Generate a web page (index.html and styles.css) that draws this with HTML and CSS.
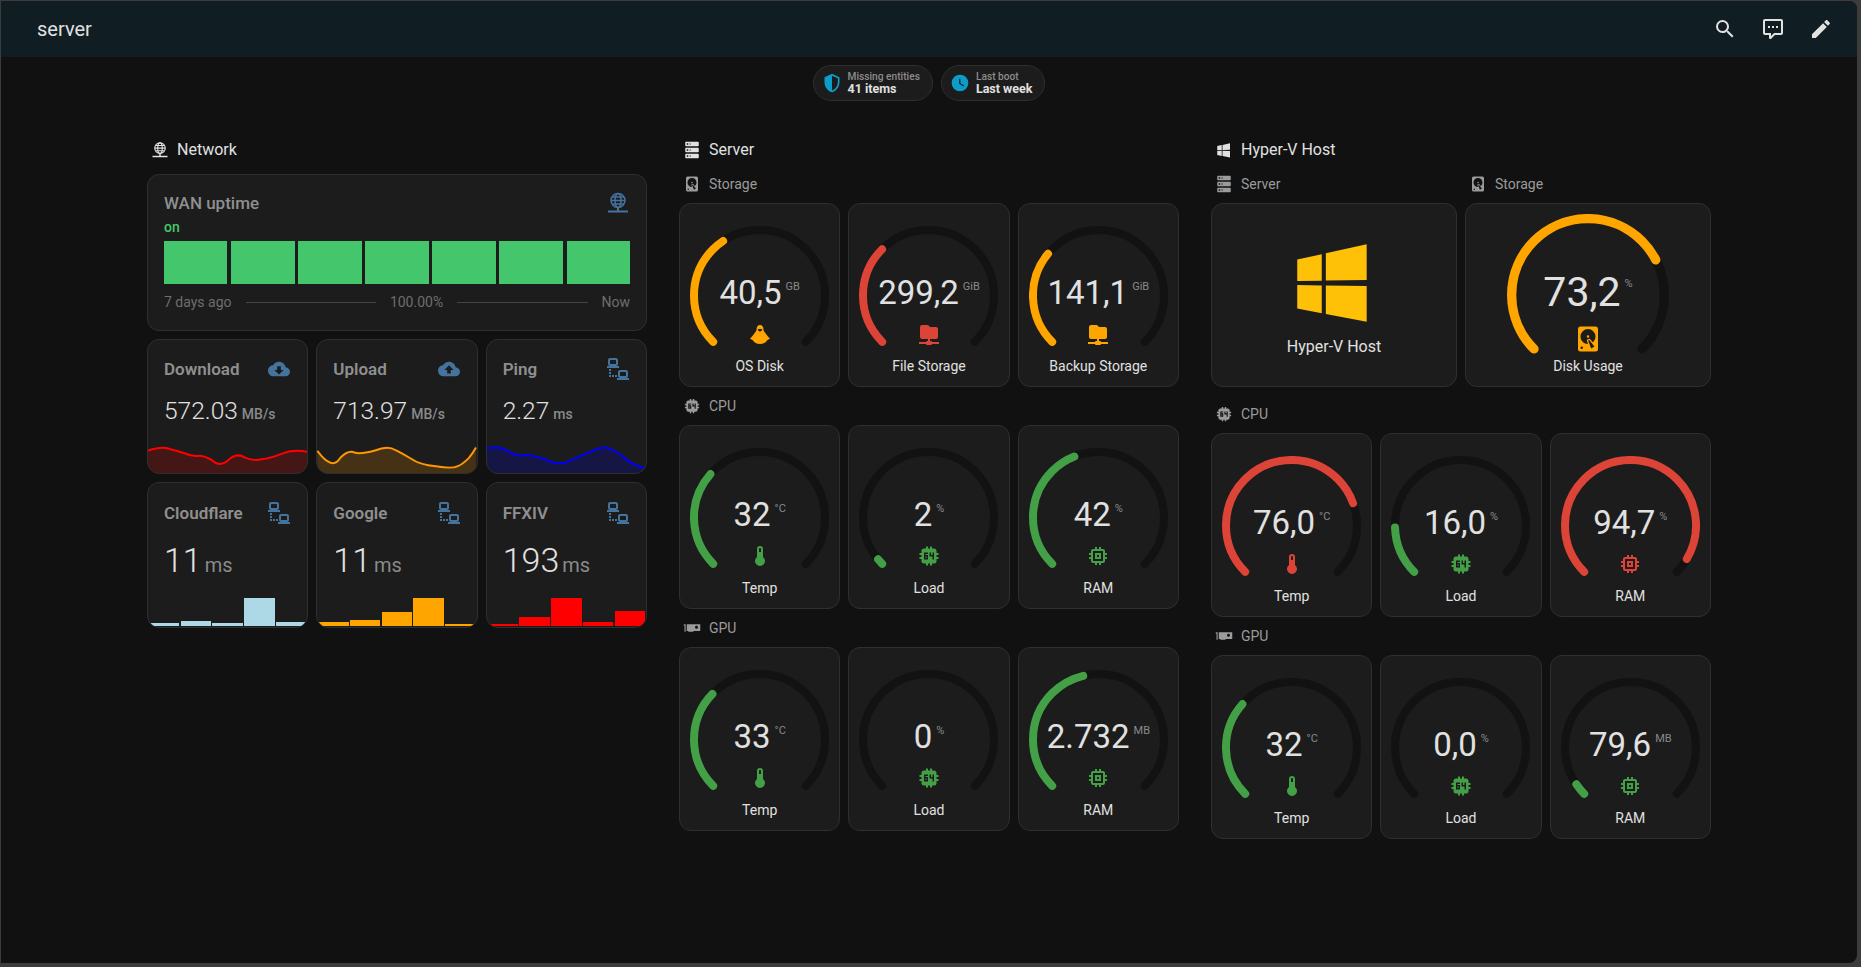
FILE: index.html
```html
<!DOCTYPE html>
<html lang="en">
<head>
    <meta charset="UTF-8">
    <meta name="viewport" content="width=device-width, initial-scale=1.0">
    <title>server</title>
    <link rel="stylesheet" href="styles.css">
</head>
<body>
    <!-- icon set -->
    <svg class="icon-set" aria-hidden="true">
        <symbol id="i-search" viewBox="0 0 24 24"><path d="M9.5,3A6.5,6.5 0 0,1 16,9.5C16,11.11 15.41,12.59 14.44,13.73L14.71,14H15.5L20.5,19L19,20.5L14,15.5V14.71L13.73,14.44C12.59,15.41 11.11,16 9.5,16A6.5,6.5 0 0,1 3,9.5A6.5,6.5 0 0,1 9.5,3M9.5,5C7,5 5,7 5,9.5C5,12 7,14 9.5,14C12,14 14,12 14,9.5C14,7 12,5 9.5,5Z"/></symbol>
        <symbol id="i-comment" viewBox="0 0 24 24"><path d="M9,22A1,1 0 0,1 8,21V18H4A2,2 0 0,1 2,16V4C2,2.89 2.9,2 4,2H20A2,2 0 0,1 22,4V16A2,2 0 0,1 20,18H13.9L10.2,21.71C10,21.9 9.75,22 9.5,22V22H9M10,16V19.08L13.08,16H20V4H4V16H10M17,11H15V9H17V11M13,11H11V9H13V11M9,11H7V9H9V11Z"/></symbol>
        <symbol id="i-pencil" viewBox="0 0 24 24"><path d="M20.71,7.04C21.1,6.65 21.1,6 20.71,5.63L18.37,3.29C18,2.9 17.35,2.9 16.96,3.29L15.12,5.12L18.87,8.87M3,17.25V21H6.75L17.81,9.93L14.06,6.18L3,17.25Z"/></symbol>
        <symbol id="i-shield" viewBox="0 0 24 24"><path d="M21,11C21,16.55 17.16,21.74 12,23C6.84,21.74 3,16.55 3,11V5L12,1L21,5V11M12,21C15.75,20 19,15.54 19,11.22V6.3L12,3.18V21Z"/></symbol>
        <symbol id="i-clock" viewBox="0 0 24 24"><path d="M12,2A10,10 0 0,0 2,12A10,10 0 0,0 12,22A10,10 0 0,0 22,12A10,10 0 0,0 12,2M16.2,16.2L11,13V7H12.5V12.2L17,14.9L16.2,16.2Z"/></symbol>
        <symbol id="i-wan" viewBox="0 0 24 24">
            <g fill="none" stroke="currentColor" stroke-width="1.5">
                <circle cx="12" cy="9.5" r="7"/>
                <ellipse cx="12" cy="9.5" rx="3" ry="7"/>
                <path d="M5 9.5H19M6 6H18M6 13H18"/>
            </g>
            <path d="M11 16H13V19.5H22V21.5H2V19.5H11Z"/>
        </symbol>
        <symbol id="i-server" viewBox="0 0 24 24"><path d="M4,1H20A1,1 0 0,1 21,2V6A1,1 0 0,1 20,7H4A1,1 0 0,1 3,6V2A1,1 0 0,1 4,1M4,9H20A1,1 0 0,1 21,10V14A1,1 0 0,1 20,15H4A1,1 0 0,1 3,14V10A1,1 0 0,1 4,9M4,17H20A1,1 0 0,1 21,18V22A1,1 0 0,1 20,23H4A1,1 0 0,1 3,22V18A1,1 0 0,1 4,17M9,5H10V3H9V5M9,13H10V11H9V13M9,21H10V19H9V21M5,3V5H7V3H5M5,11V13H7V11H5M5,19V21H7V19H5Z"/></symbol>
        <symbol id="i-windows" viewBox="0 0 24 24"><path d="M3,12V6.75L9,5.43V11.91L3,12M20,3V11.75L10,11.9V5.21L20,3M3,13L9,13.09V19.9L3,18.75V13M20,13.25V22L10,20.09V13.1L20,13.25Z"/></symbol>
        <symbol id="i-disk" viewBox="0 0 24 24"><path d="M6,2H18A2,2 0 0,1 20,4V20A2,2 0 0,1 18,22H6A2,2 0 0,1 4,20V4A2,2 0 0,1 6,2M12,4A6,6 0 0,0 6,10C6,13.31 8.69,16 12.1,16L11.22,13.77C10.95,13.29 11.11,12.68 11.59,12.4L12.45,11.9C12.93,11.63 13.54,11.79 13.82,12.27L15.74,14.69C17.12,13.59 18,11.9 18,10A6,6 0 0,0 12,4M12,9A1,1 0 0,1 13,10A1,1 0 0,1 12,11A1,1 0 0,1 11,10A1,1 0 0,1 12,9M7,18A1,1 0 0,0 6,19A1,1 0 0,0 7,20A1,1 0 0,0 8,19A1,1 0 0,0 7,18M12.09,13.27L14.58,19.58L17.17,18.08L12.95,12.77L12.09,13.27Z"/></symbol>
        <symbol id="i-cpu" viewBox="0 0 24 24"><path fill-rule="evenodd" d="M9 2.5V4.5H7A2.5 2.5 0 0 0 4.5 7V9H2.5V11H4.5V13H2.5V15H4.5V17A2.5 2.5 0 0 0 7 19.5H9V21.5H11V19.5H13V21.5H15V19.5H17A2.5 2.5 0 0 0 19.5 17V15H21.5V13H19.5V11H21.5V9H19.5V7A2.5 2.5 0 0 0 17 4.5H15V2.5H13V4.5H11V2.5ZM7 8.5H11V10H8.5V11H11V15.5H7ZM8.5 12.5V14H9.5V12.5ZM12.5 8.5H14V11H15.5V8.5H17V15.5H15.5V12.5H12.5Z"/></symbol>
        <symbol id="i-memory" viewBox="0 0 24 24"><path d="M17,17H7V7H17M21,11V9H19V7C19,5.89 18.1,5 17,5H15V3H13V5H11V3H9V5H7C5.89,5 5,5.89 5,7V9H3V11H5V13H3V15H5V17A2,2 0 0,0 7,19H9V21H11V19H13V21H15V19H17A2,2 0 0,0 19,17V15H21V13H19V11M13,13H11V11H13M15,9H9V15H15V9Z"/></symbol>
        <symbol id="i-gpu" viewBox="0 0 24 24"><path d="M1 7H3.5V17H2V8.5H1M23 7V16H14V17H7V16H5V7ZM18 9C16.9 9 16 9.9 16 11C16 12.1 16.9 13 18 13C19.1 13 20 12.1 20 11C20 9.9 19.1 9 18 9Z"/></symbol>
        <symbol id="i-thermo" viewBox="0 0 24 24"><path d="M15 13V5A3 3 0 0 0 9 5V13A5 5 0 1 0 15 13M12 4A1 1 0 0 1 13 5V8H11V5A1 1 0 0 1 12 4Z"/></symbol>
        <symbol id="i-linux" viewBox="0 0 24 24"><path fill-rule="evenodd" d="M12 3C9.7 3 8.6 4.8 8.6 7C8.6 8.6 7.6 9.9 6.5 11.3C5.3 12.8 3.8 15 2 16.8C3.2 17.2 4.2 17.6 4.9 18.2C5.8 20.6 8.8 22 12 22C15.2 22 18.2 20.6 19.1 18.2C19.8 17.6 20.8 17.2 22 16.8C20.2 15 18.7 12.8 17.5 11.3C16.4 9.9 15.4 8.6 15.4 7C15.4 4.8 14.3 3 12 3ZM9.9 7.4C11.2 6.9 12.8 6.9 14.1 7.4C14.4 7.6 14.4 8 14.1 8.2L12.7 9.2C12.3 9.5 11.7 9.5 11.3 9.2L9.9 8.2C9.6 8 9.6 7.6 9.9 7.4Z"/></symbol>
        <symbol id="i-folder" viewBox="0 0 24 24"><path d="M3,15V5A2,2 0 0,1 5,3H11L13,5H19A2,2 0 0,1 21,7V15A2,2 0 0,1 19,17H13V19H14A1,1 0 0,1 15,20H22V22H15A1,1 0 0,1 14,23H10A1,1 0 0,1 9,22H2V20H9A1,1 0 0,1 10,19H11V17H5A2,2 0 0,1 3,15Z"/></symbol>
        <symbol id="i-down" viewBox="0 0 24 24"><path d="M17,13L12,18L7,13H10V9H14V13M19.35,10.03C18.67,6.59 15.64,4 12,4C9.11,4 6.6,5.64 5.35,8.03C2.34,8.36 0,10.9 0,14A6,6 0 0,0 6,20H19A5,5 0 0,0 24,15C24,12.36 21.95,10.22 19.35,10.03Z"/></symbol>
        <symbol id="i-up" viewBox="0 0 24 24"><path d="M14,13V17H10V13H7L12,8L17,13M19.35,10.03C18.67,6.59 15.64,4 12,4C9.11,4 6.6,5.64 5.35,8.03C2.34,8.36 0,10.9 0,14A6,6 0 0,0 6,20H19A5,5 0 0,0 24,15C24,12.36 21.95,10.22 19.35,10.03Z"/></symbol>
        <symbol id="i-lan" viewBox="0 0 24 24"><path d="M4,1C2.89,1 2,1.89 2,3V7C2,8.11 2.89,9 4,9H1V11H13V9H10C11.11,9 12,8.11 12,7V3C12,1.89 11.11,1 10,1H4M4,3H10V7H4V3M3,12V14H5V12H3M14,13C12.89,13 12,13.89 12,15V19C12,20.11 12.89,21 14,21H11V23H23V21H20C21.11,21 22,20.11 22,19V15C22,13.89 21.11,13 20,13H14M3,15V17H5V15H3M14,15H20V19H14V15M3,18V20H5V18H3M6,18V20H8V18H6M9,18V20H11V18H9Z"/></symbol>
    </svg>

    <div class="app">
        <header class="topbar">
            <h1 class="topbar-title">server</h1>
            <div class="topbar-actions">
                <svg class="icon"><use href="#i-search"/></svg>
                <svg class="icon"><use href="#i-comment"/></svg>
                <svg class="icon"><use href="#i-pencil"/></svg>
            </div>
        </header>

        <div class="chips">
            <div class="chip">
                <svg class="chip-icon"><use href="#i-shield"/></svg>
                <div><div class="chip-label">Missing entities</div><div class="chip-value">41 items</div></div>
            </div>
            <div class="chip">
                <svg class="chip-icon"><use href="#i-clock"/></svg>
                <div><div class="chip-label">Last boot</div><div class="chip-value">Last week</div></div>
            </div>
        </div>

        <main class="columns">
            <!-- Network -->
            <section>
                <h2 class="heading heading-network"><svg class="head-icon"><use href="#i-wan"/></svg>Network</h2>
                <div class="card wan">
                    <div class="card-head">
                        <span class="card-title">WAN uptime</span>
                        <svg class="state-icon"><use href="#i-wan"/></svg>
                    </div>
                    <div class="wan-state">on</div>
                    <div class="wan-bars">
                        <span></span><span></span><span></span><span></span><span></span><span></span><span></span>
                    </div>
                    <div class="wan-foot">
                        <span>7 days ago</span><i></i><span>100.00%</span><i></i><span>Now</span>
                    </div>
                </div>
                <div class="sensors">
                    <div class="card sensor">
                        <div class="card-head">
                            <span class="card-title">Download</span>
                            <svg class="state-icon cloud"><use href="#i-down"/></svg>
                        </div>
                        <div class="reading"><b>572.03</b><span>MB/s</span></div>
                        <svg class="spark spark-red" viewBox="22 330 481 101">
                            <path class="area" d="M22,362Q65,348 87,357Q110,362 132,370Q155,380 172,378Q190,376 215,391Q240,414 265,390Q290,367 315,383Q340,394 365,388Q390,386 425,372Q460,356 503,366V431H22Z"/>
                            <path class="line" d="M22,362Q65,348 87,357Q110,362 132,370Q155,380 172,378Q190,376 215,391Q240,414 265,390Q290,367 315,383Q340,394 365,388Q390,386 425,372Q460,356 503,366"/>
                        </svg>
                    </div>
                    <div class="card sensor">
                        <div class="card-head">
                            <span class="card-title">Upload</span>
                            <svg class="state-icon cloud"><use href="#i-up"/></svg>
                        </div>
                        <div class="reading"><b>713.97</b><span>MB/s</span></div>
                        <svg class="spark spark-orange" viewBox="529 330 484 101">
                            <path class="area" d="M530,363Q575,425 600,384Q625,358 645,369Q665,373 705,362Q745,345 768,361Q790,372 815,387Q840,405 890,410Q940,418 955,410Q970,405 990,385Q1003,370 1012,353V431H530Z"/>
                            <path class="line" d="M530,363Q575,425 600,384Q625,358 645,369Q665,373 705,362Q745,345 768,361Q790,372 815,387Q840,405 890,410Q940,418 955,410Q970,405 990,385Q1003,370 1012,353"/>
                        </svg>
                    </div>
                    <div class="card sensor">
                        <div class="card-head">
                            <span class="card-title">Ping</span>
                            <svg class="state-icon"><use href="#i-lan"/></svg>
                        </div>
                        <div class="reading"><b>2.27</b><span>ms</span></div>
                        <svg class="spark spark-blue" viewBox="1039 330 481 101">
                            <path class="area" d="M1040,355Q1080,347 1105,365Q1130,381 1150,376Q1170,373 1216,389Q1262,409 1286,394Q1310,383 1350,366Q1390,346 1408,356Q1425,360 1452,382Q1480,408 1520,415V431H1040Z"/>
                            <path class="line" d="M1040,355Q1080,347 1105,365Q1130,381 1150,376Q1170,373 1216,389Q1262,409 1286,394Q1310,383 1350,366Q1390,346 1408,356Q1425,360 1452,382Q1480,408 1520,415"/>
                        </svg>
                    </div>
                    <div class="card sensor sensor-tall">
                        <div class="card-head">
                            <span class="card-title">Cloudflare</span>
                            <svg class="state-icon"><use href="#i-lan"/></svg>
                        </div>
                        <div class="reading"><b>11</b><span>ms</span></div>
                        <div class="hist hist-blue">
                            <span style="height:3.7px"></span><span style="height:5.3px"></span><span style="height:3px"></span><span style="height:28.3px"></span><span style="height:4.3px"></span>
                        </div>
                    </div>
                    <div class="card sensor sensor-tall">
                        <div class="card-head">
                            <span class="card-title">Google</span>
                            <svg class="state-icon"><use href="#i-lan"/></svg>
                        </div>
                        <div class="reading"><b>11</b><span>ms</span></div>
                        <div class="hist hist-orange">
                            <span style="height:4.3px"></span><span style="height:6px"></span><span style="height:14px"></span><span style="height:28.3px"></span><span style="height:2.7px"></span>
                        </div>
                    </div>
                    <div class="card sensor sensor-tall">
                        <div class="card-head">
                            <span class="card-title">FFXIV</span>
                            <svg class="state-icon"><use href="#i-lan"/></svg>
                        </div>
                        <div class="reading"><b>193</b><span>ms</span></div>
                        <div class="hist hist-red">
                            <span style="height:2.7px"></span><span style="height:9.3px"></span><span style="height:28.3px"></span><span style="height:4.3px"></span><span style="height:15.7px"></span>
                        </div>
                    </div>
                </div>
            </section>

            <!-- Server -->
            <section>
                <h2 class="heading"><svg class="head-icon"><use href="#i-server"/></svg>Server</h2>

                <h3 class="subheading"><svg class="head-icon"><use href="#i-disk"/></svg>Storage</h3>
                <div class="gauges">
                    <div class="card gauge warn">
                        <svg class="dial" viewBox="0 0 139 139"><path class="track" d="M23.2,115.8A65.5,65.5 0 1 1 115.8,115.8"/><path class="fill" d="M23.2,115.8A65.5,65.5 0 1 1 115.8,115.8" pathLength="100" stroke-dasharray="37.5 200"/></svg>
                        <div class="value">40,5<span class="unit">GB</span></div>
                        <svg class="gauge-icon"><use href="#i-linux"/></svg>
                        <div class="gauge-name">OS Disk</div>
                    </div>
                    <div class="card gauge crit">
                        <svg class="dial" viewBox="0 0 139 139"><path class="track" d="M23.2,115.8A65.5,65.5 0 1 1 115.8,115.8"/><path class="fill" d="M23.2,115.8A65.5,65.5 0 1 1 115.8,115.8" pathLength="100" stroke-dasharray="33.3 200"/></svg>
                        <div class="value">299,2<span class="unit">GiB</span></div>
                        <svg class="gauge-icon"><use href="#i-folder"/></svg>
                        <div class="gauge-name">File Storage</div>
                    </div>
                    <div class="card gauge warn">
                        <svg class="dial" viewBox="0 0 139 139"><path class="track" d="M23.2,115.8A65.5,65.5 0 1 1 115.8,115.8"/><path class="fill" d="M23.2,115.8A65.5,65.5 0 1 1 115.8,115.8" pathLength="100" stroke-dasharray="31.3 200"/></svg>
                        <div class="value">141,1<span class="unit">GiB</span></div>
                        <svg class="gauge-icon"><use href="#i-folder"/></svg>
                        <div class="gauge-name">Backup Storage</div>
                    </div>
                </div>

                <h3 class="subheading"><svg class="head-icon"><use href="#i-cpu"/></svg>CPU</h3>
                <div class="gauges">
                    <div class="card gauge ok">
                        <svg class="dial" viewBox="0 0 139 139"><path class="track" d="M23.2,115.8A65.5,65.5 0 1 1 115.8,115.8"/><path class="fill" d="M23.2,115.8A65.5,65.5 0 1 1 115.8,115.8" pathLength="100" stroke-dasharray="32 200"/></svg>
                        <div class="value">32<span class="unit">°C</span></div>
                        <svg class="gauge-icon"><use href="#i-thermo"/></svg>
                        <div class="gauge-name">Temp</div>
                    </div>
                    <div class="card gauge ok">
                        <svg class="dial" viewBox="0 0 139 139"><path class="track" d="M23.2,115.8A65.5,65.5 0 1 1 115.8,115.8"/><path class="fill" d="M23.2,115.8A65.5,65.5 0 1 1 115.8,115.8" pathLength="100" stroke-dasharray="2 200"/></svg>
                        <div class="value">2<span class="unit">%</span></div>
                        <svg class="gauge-icon"><use href="#i-cpu"/></svg>
                        <div class="gauge-name">Load</div>
                    </div>
                    <div class="card gauge ok">
                        <svg class="dial" viewBox="0 0 139 139"><path class="track" d="M23.2,115.8A65.5,65.5 0 1 1 115.8,115.8"/><path class="fill" d="M23.2,115.8A65.5,65.5 0 1 1 115.8,115.8" pathLength="100" stroke-dasharray="42 200"/></svg>
                        <div class="value">42<span class="unit">%</span></div>
                        <svg class="gauge-icon"><use href="#i-memory"/></svg>
                        <div class="gauge-name">RAM</div>
                    </div>
                </div>

                <h3 class="subheading"><svg class="head-icon"><use href="#i-gpu"/></svg>GPU</h3>
                <div class="gauges">
                    <div class="card gauge ok">
                        <svg class="dial" viewBox="0 0 139 139"><path class="track" d="M23.2,115.8A65.5,65.5 0 1 1 115.8,115.8"/><path class="fill" d="M23.2,115.8A65.5,65.5 0 1 1 115.8,115.8" pathLength="100" stroke-dasharray="33 200"/></svg>
                        <div class="value">33<span class="unit">°C</span></div>
                        <svg class="gauge-icon"><use href="#i-thermo"/></svg>
                        <div class="gauge-name">Temp</div>
                    </div>
                    <div class="card gauge ok">
                        <svg class="dial" viewBox="0 0 139 139"><path class="track" d="M23.2,115.8A65.5,65.5 0 1 1 115.8,115.8"/></svg>
                        <div class="value">0<span class="unit">%</span></div>
                        <svg class="gauge-icon"><use href="#i-cpu"/></svg>
                        <div class="gauge-name">Load</div>
                    </div>
                    <div class="card gauge ok">
                        <svg class="dial" viewBox="0 0 139 139"><path class="track" d="M23.2,115.8A65.5,65.5 0 1 1 115.8,115.8"/><path class="fill" d="M23.2,115.8A65.5,65.5 0 1 1 115.8,115.8" pathLength="100" stroke-dasharray="45 200"/></svg>
                        <div class="value">2.732<span class="unit">MB</span></div>
                        <svg class="gauge-icon"><use href="#i-memory"/></svg>
                        <div class="gauge-name">RAM</div>
                    </div>
                </div>
            </section>

            <!-- Hyper-V Host -->
            <section>
                <h2 class="heading"><svg class="head-icon"><use href="#i-windows"/></svg>Hyper-V Host</h2>

                <div class="host-top">
                    <div>
                        <h3 class="subheading"><svg class="head-icon"><use href="#i-server"/></svg>Server</h3>
                        <div class="card host">
                            <svg class="host-logo"><use href="#i-windows"/></svg>
                            <div class="host-name">Hyper-V Host</div>
                        </div>
                    </div>
                    <div>
                        <h3 class="subheading"><svg class="head-icon"><use href="#i-disk"/></svg>Storage</h3>
                        <div class="card gauge gauge-large warn">
                            <svg class="dial" viewBox="0 0 139 139"><path class="track" d="M23.2,115.8A65.5,65.5 0 1 1 115.8,115.8"/><path class="fill" d="M23.2,115.8A65.5,65.5 0 1 1 115.8,115.8" pathLength="100" stroke-dasharray="73.2 200"/></svg>
                            <div class="value">73,2<span class="unit">%</span></div>
                            <svg class="gauge-icon"><use href="#i-disk"/></svg>
                            <div class="gauge-name">Disk Usage</div>
                        </div>
                    </div>
                </div>

                <h3 class="subheading subheading-host"><svg class="head-icon"><use href="#i-cpu"/></svg>CPU</h3>
                <div class="gauges">
                    <div class="card gauge crit">
                        <svg class="dial" viewBox="0 0 139 139"><path class="track" d="M23.2,115.8A65.5,65.5 0 1 1 115.8,115.8"/><path class="fill" d="M23.2,115.8A65.5,65.5 0 1 1 115.8,115.8" pathLength="100" stroke-dasharray="76 200"/></svg>
                        <div class="value">76,0<span class="unit">°C</span></div>
                        <svg class="gauge-icon"><use href="#i-thermo"/></svg>
                        <div class="gauge-name">Temp</div>
                    </div>
                    <div class="card gauge ok">
                        <svg class="dial" viewBox="0 0 139 139"><path class="track" d="M23.2,115.8A65.5,65.5 0 1 1 115.8,115.8"/><path class="fill" d="M23.2,115.8A65.5,65.5 0 1 1 115.8,115.8" pathLength="100" stroke-dasharray="16 200"/></svg>
                        <div class="value">16,0<span class="unit">%</span></div>
                        <svg class="gauge-icon"><use href="#i-cpu"/></svg>
                        <div class="gauge-name">Load</div>
                    </div>
                    <div class="card gauge crit">
                        <svg class="dial" viewBox="0 0 139 139"><path class="track" d="M23.2,115.8A65.5,65.5 0 1 1 115.8,115.8"/><path class="fill" d="M23.2,115.8A65.5,65.5 0 1 1 115.8,115.8" pathLength="100" stroke-dasharray="94.7 200"/></svg>
                        <div class="value">94,7<span class="unit">%</span></div>
                        <svg class="gauge-icon"><use href="#i-memory"/></svg>
                        <div class="gauge-name">RAM</div>
                    </div>
                </div>

                <h3 class="subheading"><svg class="head-icon"><use href="#i-gpu"/></svg>GPU</h3>
                <div class="gauges">
                    <div class="card gauge ok">
                        <svg class="dial" viewBox="0 0 139 139"><path class="track" d="M23.2,115.8A65.5,65.5 0 1 1 115.8,115.8"/><path class="fill" d="M23.2,115.8A65.5,65.5 0 1 1 115.8,115.8" pathLength="100" stroke-dasharray="32 200"/></svg>
                        <div class="value">32<span class="unit">°C</span></div>
                        <svg class="gauge-icon"><use href="#i-thermo"/></svg>
                        <div class="gauge-name">Temp</div>
                    </div>
                    <div class="card gauge ok">
                        <svg class="dial" viewBox="0 0 139 139"><path class="track" d="M23.2,115.8A65.5,65.5 0 1 1 115.8,115.8"/></svg>
                        <div class="value">0,0<span class="unit">%</span></div>
                        <svg class="gauge-icon"><use href="#i-cpu"/></svg>
                        <div class="gauge-name">Load</div>
                    </div>
                    <div class="card gauge ok">
                        <svg class="dial" viewBox="0 0 139 139"><path class="track" d="M23.2,115.8A65.5,65.5 0 1 1 115.8,115.8"/><path class="fill" d="M23.2,115.8A65.5,65.5 0 1 1 115.8,115.8" pathLength="100" stroke-dasharray="4 200"/></svg>
                        <div class="value">79,6<span class="unit">MB</span></div>
                        <svg class="gauge-icon"><use href="#i-memory"/></svg>
                        <div class="gauge-name">RAM</div>
                    </div>
                </div>
            </section>
        </main>
    </div>
</body>
</html>
```

FILE: styles.css
```css
* {
    box-sizing: border-box;
}

body {
    margin: 0;
    height: 967px;
    padding: 1px 4px 4px 1px;
    overflow: hidden;
    background-color: #3c3c3c;
    font-family: Roboto, "Liberation Sans", sans-serif;
    color: #e1e1e1;
}

svg {
    fill: currentColor;
}

.icon-set {
    display: none;
}

.app {
    height: 100%;
    background-color: #111;
    border-radius: 0 8px 8px 0;
    overflow: hidden;
}

/* top bar */
.topbar {
    display: flex;
    align-items: center;
    justify-content: space-between;
    height: 56px;
    padding: 0 24px 0 36px;
    background-color: #101e24;
}

.topbar-title {
    margin: 0;
    font-size: 20px;
    font-weight: 400;
}

.topbar-actions {
    display: flex;
    gap: 24px;
}

.icon {
    display: block;
    width: 24px;
    height: 24px;
}

/* chips */
.chips {
    display: flex;
    justify-content: center;
    gap: 8px;
    margin-top: 8px;
}

.chip {
    display: flex;
    align-items: center;
    gap: 6px;
    height: 36px;
    padding: 0 12px 0 8px;
    background-color: #1c1c1c;
    border: 1px solid #2f2f2f;
    border-radius: 18px;
}

.chip-icon {
    width: 20px;
    height: 20px;
    color: #0a9dc9;
}

.chip-label {
    font-size: 10.2px;
    line-height: 12px;
    font-weight: 500;
    color: #8c8c8c;
}

.chip-value {
    font-size: 12.5px;
    line-height: 12px;
    font-weight: 700;
}

/* columns */
.columns {
    display: grid;
    grid-template-columns: repeat(3, 500px);
    justify-content: center;
    gap: 32px;
    margin-top: 36px;
}

.heading {
    display: flex;
    align-items: center;
    gap: 8px;
    height: 24px;
    margin: 0;
    padding: 1px 0 0 4px;
    font-size: 16px;
    font-weight: 400;
}

.heading-network {
    margin-bottom: 13px;
}

.subheading {
    display: flex;
    align-items: center;
    gap: 8px;
    height: 24px;
    margin: 6px 0 8px;
    padding: 1px 0 0 4px;
    font-size: 14px;
    font-weight: 400;
    color: #9b9b9b;
}

.heading + .subheading,
.heading + .host-top .subheading {
    margin-top: 10px;
}

.subheading-host {
    margin-top: 14px;
}

.head-icon {
    flex: none;
    width: 18px;
    height: 18px;
}

.card {
    background-color: #1c1c1c;
    border: 1px solid #2f2f2f;
    border-radius: 12px;
}

.card-head {
    display: flex;
    align-items: center;
    justify-content: space-between;
    height: 24px;
    margin: 17px 16px 0;
}

.card-title {
    font-size: 17px;
    font-weight: 600;
    color: #8f8f8f;
}

.state-icon {
    width: 24px;
    height: 24px;
    color: #44739e;
}

.state-icon.cloud {
    width: 22px;
    margin-right: 1px;
}

/* uptime card */
.wan {
    height: 157px;
    margin-bottom: 8px;
}

.wan .card-head {
    margin-top: 16px;
}

.wan .card-title {
    font-weight: 500;
}

.wan-state {
    margin: 4px 16px 0;
    font-size: 14px;
    line-height: 16px;
    font-weight: 500;
    color: #44c76c;
}

.wan-bars {
    display: flex;
    gap: 3.7px;
    height: 43px;
    margin: 6px 16px 0;
}

.wan-bars span {
    flex: 1;
    background-color: #44c76c;
}

.wan-foot {
    display: flex;
    align-items: center;
    gap: 14px;
    height: 20px;
    margin: 8px 16px 0;
    font-size: 14px;
    color: #6e6e6e;
}

.wan-foot i {
    flex: 1;
    height: 1px;
    background-color: #444;
}

/* sensor cards */
.sensors {
    display: grid;
    grid-template-columns: repeat(3, 1fr);
    gap: 8px;
}

.sensor {
    display: flex;
    flex-direction: column;
    height: 135px;
    overflow: hidden;
}

.reading {
    display: flex;
    align-items: baseline;
    gap: 4px;
    margin: 14px 16px 0;
    line-height: 32px;
    white-space: nowrap;
}

.reading b {
    font-size: 24.5px;
    font-weight: 300;
}

.reading span {
    font-size: 14px;
    font-weight: 500;
    color: #8a8a8a;
}

.sensor-tall {
    height: 146px;
}

.sensor-tall .card-head {
    margin-top: 18px;
}

.sensor-tall .reading {
    gap: 3px;
    margin-top: 15px;
    line-height: 40px;
}

.sensor-tall .reading b {
    font-size: 34px;
}

.sensor-tall .reading span {
    font-size: 20px;
    font-weight: 400;
}

.spark {
    display: block;
    flex: none;
    width: 100%;
    margin-top: auto;
}

.spark .line {
    fill: none;
    stroke: currentColor;
    stroke-width: 6;
}

.spark .area {
    fill: currentColor;
    opacity: 0.18;
}

.spark-red {
    color: #f00;
}

.spark-orange {
    color: #ff9800;
}

.spark-blue {
    color: #00f;
}

.hist {
    display: flex;
    align-items: flex-end;
    gap: 1.3px;
    margin-top: auto;
    padding: 0 1px 0.6px;
}

.hist span {
    flex: 1;
}

.hist-blue span {
    background-color: #add8e6;
}

.hist-orange span {
    background-color: #ffa500;
}

.hist-red span {
    background-color: #f00;
}

/* gauges */
.gauges {
    display: grid;
    grid-template-columns: repeat(3, 1fr);
    gap: 8px;
}

.gauge {
    position: relative;
    display: flex;
    flex-direction: column;
    align-items: center;
    height: 184px;
    padding-top: 69px;
}

.ok {
    color: #43a047;
}

.warn {
    color: #ffa500;
}

.crit {
    color: #db4437;
}

.dial {
    position: absolute;
    top: 21.5px;
    left: 50%;
    width: 139px;
    height: 139px;
    margin-left: -69.5px;
    fill: none;
    stroke-width: 8;
    stroke-linecap: round;
}

.track {
    stroke: #121212;
}

.fill {
    stroke: currentColor;
}

.value {
    position: relative;
    display: flex;
    align-items: flex-start;
    font-size: 33px;
    line-height: 40px;
    color: #e1e1e1;
}

.unit {
    margin: 8px 0 0 4px;
    font-size: 11px;
    line-height: 12px;
    color: #8a8a8a;
}

.gauge-icon {
    position: relative;
    flex: none;
    width: 24px;
    height: 24px;
    margin-top: 9px;
}

.gauge-name {
    position: relative;
    margin-top: 10px;
    font-size: 14px;
    line-height: 20px;
    color: #e1e1e1;
}

.gauge-large {
    padding-top: 64px;
}

.gauge-large .dial {
    top: 10px;
    width: 162px;
    height: 162px;
    margin-left: -81px;
}

.gauge-large .value {
    font-size: 41px;
    line-height: 48px;
}

.gauge-large .unit {
    margin-top: 10px;
}

.gauge-large .gauge-icon {
    width: 30px;
    height: 30px;
    margin-top: 8px;
}

.gauge-large .gauge-name {
    margin-top: 2px;
}

/* host card */
.host-top {
    display: grid;
    grid-template-columns: 1fr 1fr;
    gap: 8px;
}

.host {
    display: flex;
    flex-direction: column;
    align-items: center;
    height: 184px;
    padding-top: 28px;
}

.host-logo {
    flex: none;
    width: 98px;
    height: 98px;
    color: #ffc107;
}

.host-name {
    margin-top: 5px;
    font-size: 16px;
    line-height: 24px;
}
```
